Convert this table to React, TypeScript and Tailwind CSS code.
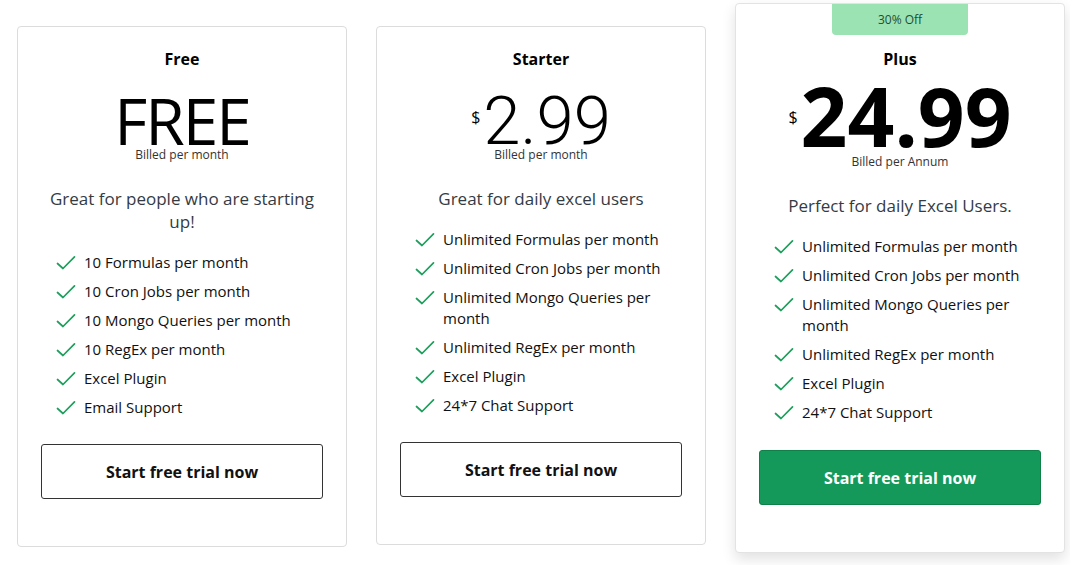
type Plan = {
  name: string;
  price: string;
  currency?: boolean;
  billed: string;
  blurb: string;
  features: string[];
  featured?: boolean;
};

const plans: Plan[] = [
  {
    name: "Free",
    price: "FREE",
    billed: "Billed per month",
    blurb: "Great for people who are starting up!",
    features: [
      "10 Formulas per month",
      "10 Cron Jobs per month",
      "10 Mongo Queries per month",
      "10 RegEx per month",
      "Excel Plugin",
      "Email Support",
    ],
  },
  {
    name: "Starter",
    price: "2.99",
    currency: true,
    billed: "Billed per month",
    blurb: "Great for daily excel users",
    features: [
      "Unlimited Formulas per month",
      "Unlimited Cron Jobs per month",
      "Unlimited Mongo Queries per month",
      "Unlimited RegEx per month",
      "Excel Plugin",
      "24*7 Chat Support",
    ],
  },
  {
    name: "Plus",
    price: "24.99",
    currency: true,
    billed: "Billed per Annum",
    blurb: "Perfect for daily Excel Users.",
    featured: true,
    features: [
      "Unlimited Formulas per month",
      "Unlimited Cron Jobs per month",
      "Unlimited Mongo Queries per month",
      "Unlimited RegEx per month",
      "Excel Plugin",
      "24*7 Chat Support",
    ],
  },
];

const CheckMark = () => (
  <svg
    viewBox="0 0 20 16"
    className="mt-[3px] h-[16px] w-[20px] shrink-0"
    fill="none"
    stroke="#1f9e5e"
    strokeWidth={1.7}
    strokeLinecap="round"
    strokeLinejoin="round"
  >
    <path d="M1.5 8.5 L7 13.5 L18.5 1.8" />
  </svg>
);

const PlanCard = ({ plan }: { plan: Plan }) => {
  const featured = plan.featured;
  return (
    <div
      className={
        featured
          ? "flex w-[330px] flex-col items-center rounded-[4px] border border-[#e3e3e3] bg-white pb-[47px] shadow-[0_6px_14px_rgba(0,0,0,0.12)]"
          : "mt-[23px] flex w-[330px] flex-col items-center rounded-[4px] border border-[#dcdcdc] bg-white pb-[47px]"
      }
    >
      {featured && (
        <div className="flex h-[31px] w-[136px] items-center justify-center rounded-b-[4px] bg-[#9be3b3] text-[12px] text-[#1e4d33]">
          30% Off
        </div>
      )}
      <div
        className={
          featured
            ? "mt-[12px] text-[16px] font-bold leading-[24px] text-black"
            : "mt-[20px] text-[16px] font-bold leading-[24px] text-black"
        }
      >
        {plan.name}
      </div>

      <div
        className={
          featured
            ? "mt-[5px] flex items-start justify-center"
            : "mt-[24px] flex items-start justify-center"
        }
      >
        {plan.currency && (
          <span
            className={
              featured
                ? "mr-[3px] mt-[33px] text-[16px] leading-none text-black"
                : "mr-[3px] mt-[14px] text-[16px] leading-none text-black"
            }
          >
            $
          </span>
        )}
        <span
          className={
            featured
              ? "text-[82px] font-bold leading-[78px] text-black"
              : plan.currency
                ? "font-['Roboto',sans-serif] text-[67px] font-light leading-[52px] text-black"
                : "text-[64px] leading-[52px] tracking-[-2px] text-black"
          }
        >
          {plan.price}
        </span>
      </div>
      <div className="text-[12px] leading-[16px] text-[#333]">{plan.billed}</div>

      <p className="mt-[24px] px-[24px] text-center text-[17px] leading-[23px] text-[#333b45]">
        {plan.blurb}
      </p>

      <ul className="mt-[19px] flex w-full flex-col gap-[8px] pl-[38px] pr-[30px]">
        {plan.features.map((f) => (
          <li key={f} className="flex items-start gap-[8px]">
            <CheckMark />
            <span className="text-[15px] leading-[21px] text-[#111]">{f}</span>
          </li>
        ))}
      </ul>

      <button
        className={
          featured
            ? "mt-[27px] h-[55px] w-[282px] rounded-[3px] border border-[#0e8048] bg-[#15995a] text-[16px] font-bold text-white"
            : "mt-[26px] h-[55px] w-[282px] rounded-[3px] border border-[#333] bg-white text-[16px] font-bold text-[#111]"
        }
      >
        Start free trial now
      </button>
    </div>
  );
};

export default function App() {
  return (
    <div className="min-h-[565px] w-[1070px] bg-white font-['Open_Sans',sans-serif]">
      <div className="flex items-start gap-[29px] pl-[17px] pt-[3px]">
        {plans.map((p) => (
          <PlanCard key={p.name} plan={p} />
        ))}
      </div>
    </div>
  );
}
